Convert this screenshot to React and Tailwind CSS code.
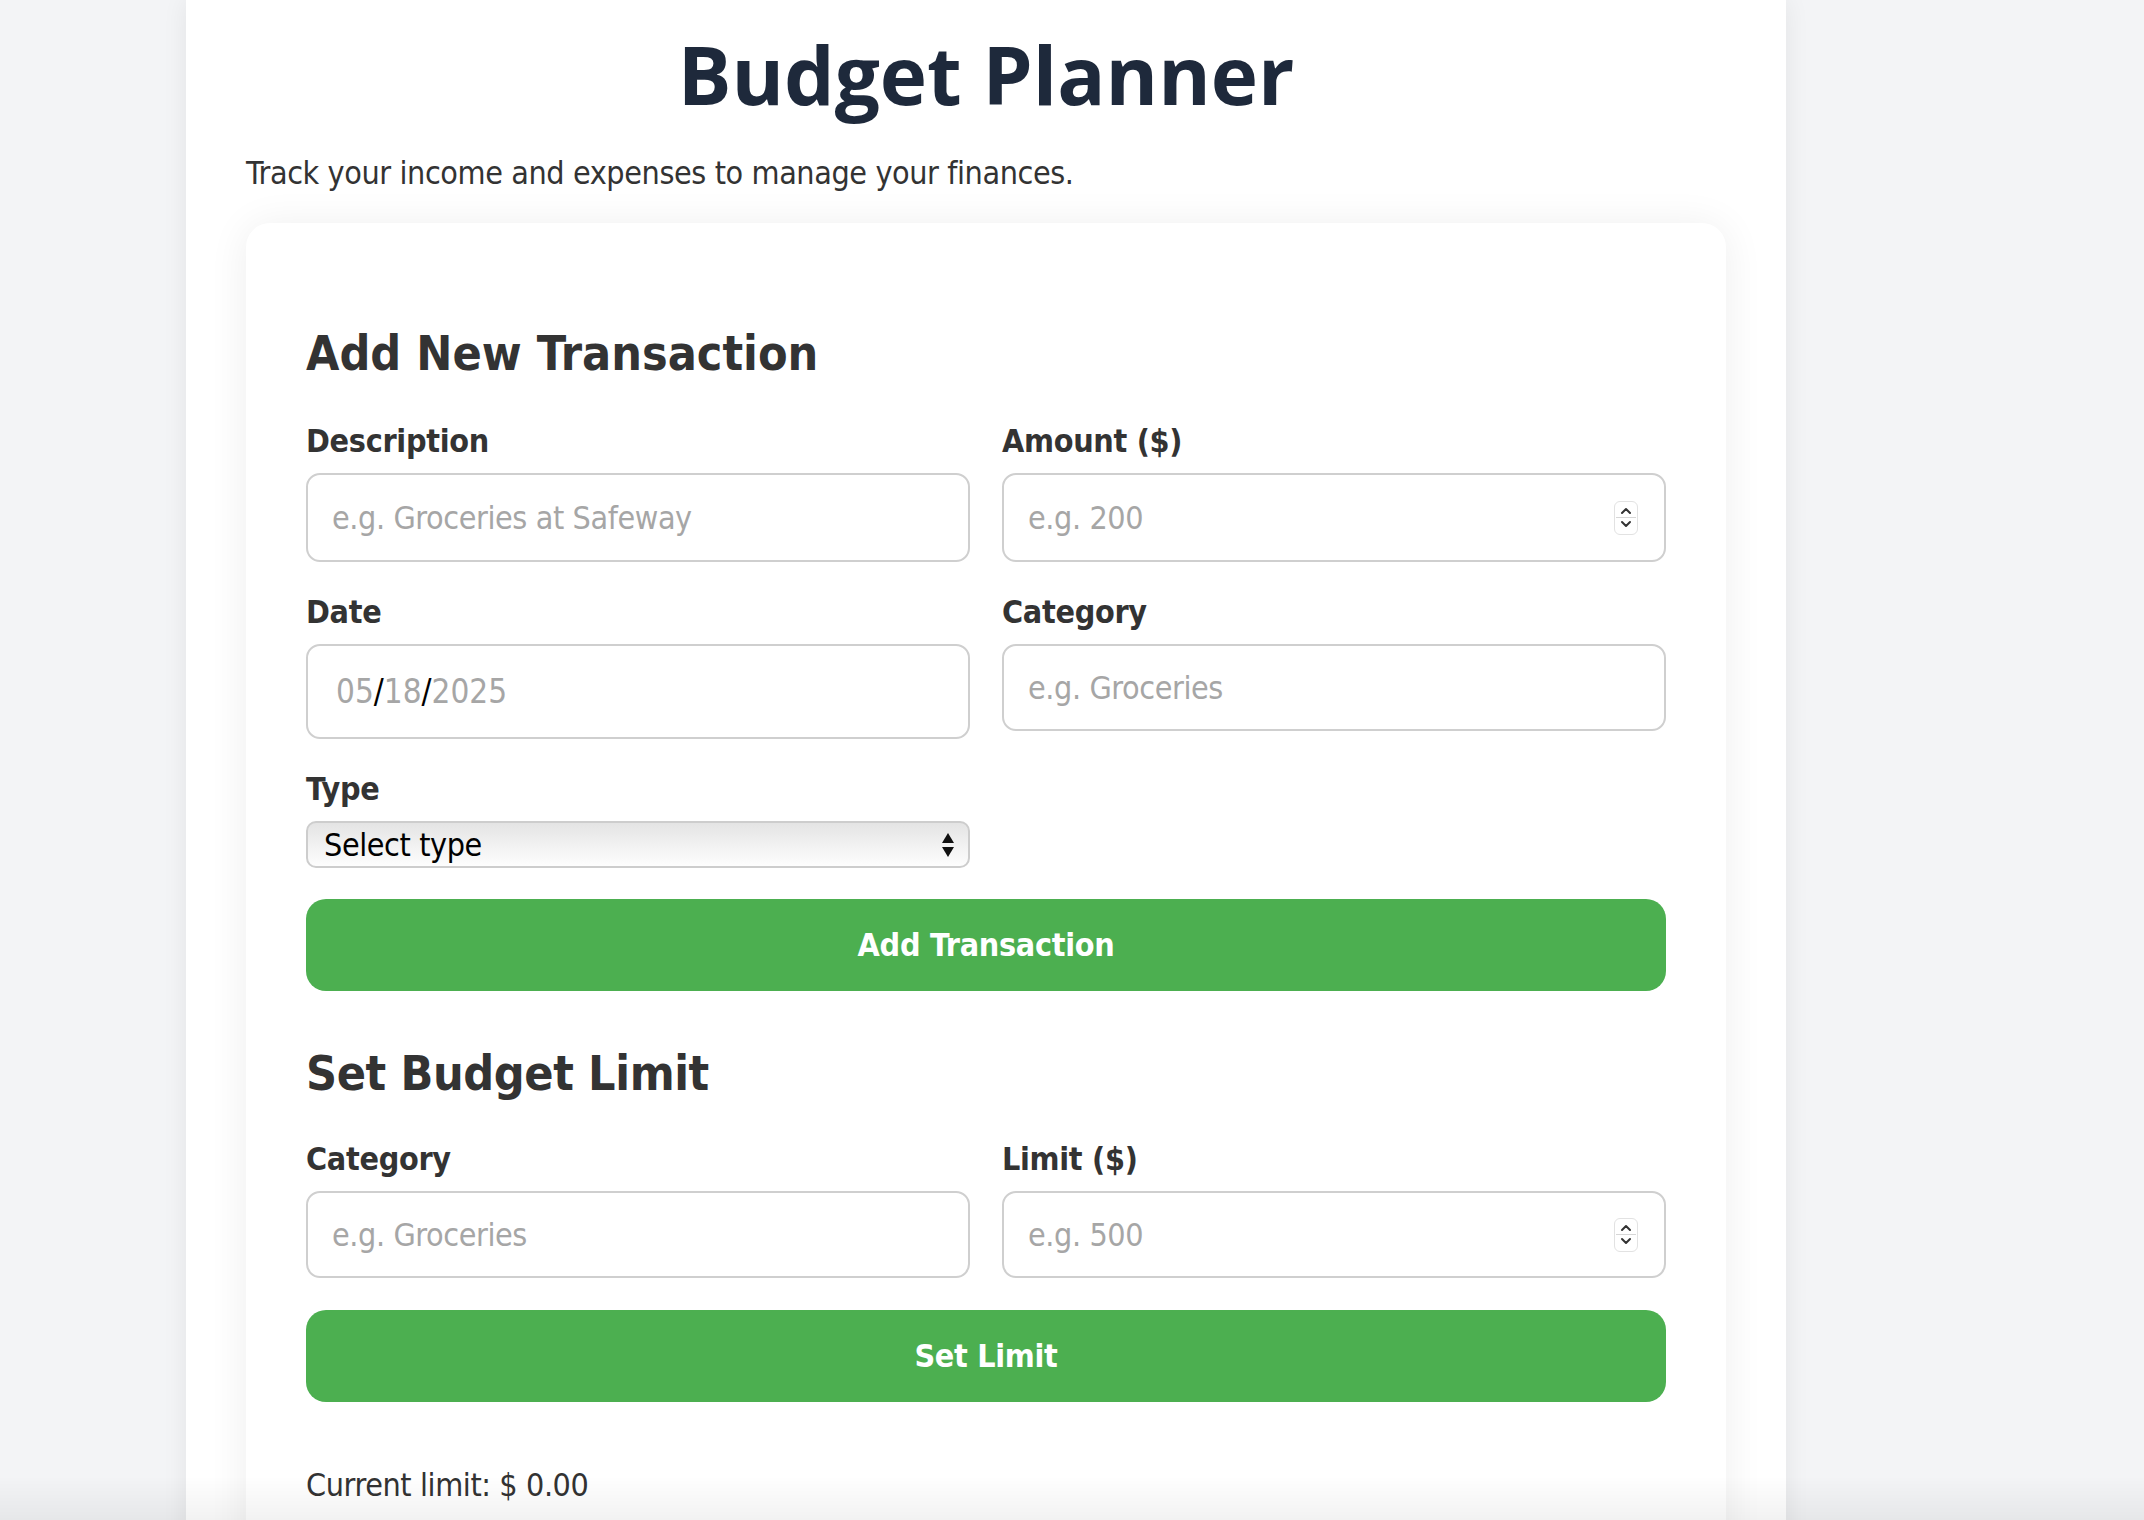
import { useState } from "react";

const body = "font-['DejaVu_Sans_Condensed','DejaVu_Sans',sans-serif] font-stretch-condensed";

function Label({ children, className = "" }) {
  return (
    <label className={`block text-[32px] leading-[36px] tracking-[-0.3px] font-bold text-[#333333] mb-[14px] ${className}`}>
      {children}
    </label>
  );
}

function TextInput({ placeholder, className = "h-[89px]" }) {
  return (
    <input
      type="text"
      placeholder={placeholder}
      className={`block w-full ${className} px-[24px] rounded-[14px] border-2 border-[#cfcfcf] bg-white text-[32px] tracking-[-0.4px] text-[#333333] placeholder:text-[#a6a6a6] outline-none ${body}`}
    />
  );
}

function Spinner() {
  return (
    <div className="absolute right-[28px] top-1/2 -translate-y-1/2 w-[24px] h-[34px] rounded-[6px] border border-[#e2e2e2] bg-white flex flex-col items-center justify-center">
      <svg width="14" height="10" viewBox="0 0 14 10" fill="none" stroke="#333" strokeWidth="2" strokeLinecap="round" strokeLinejoin="round">
        <path d="M3 7 L7 3 L11 7" />
      </svg>
      <div className="w-[20px] h-px bg-[#d6d6d6] my-[1px]" />
      <svg width="14" height="10" viewBox="0 0 14 10" fill="none" stroke="#333" strokeWidth="2" strokeLinecap="round" strokeLinejoin="round">
        <path d="M3 3 L7 7 L11 3" />
      </svg>
    </div>
  );
}

function NumberInput({ placeholder, className }) {
  return (
    <div className="relative">
      <TextInput placeholder={placeholder} className={className} />
      <Spinner />
    </div>
  );
}

function GreenButton({ children }) {
  return (
    <button className={`block w-full h-[92px] rounded-[20px] bg-[#4caf50] text-white text-[32px] tracking-[-0.3px] font-bold ${body}`}>
      {children}
    </button>
  );
}

export default function App() {
  const [type, setType] = useState("");
  const limit = 0;

  return (
    <div className={`min-h-screen bg-[#f3f4f6] ${body}`}>
      <div className="ml-[186px] w-[1600px] min-h-[1520px] bg-white px-[60px] shadow-[0_0_24px_rgba(0,0,0,0.07)]">
        <h1 className="pt-[26px] text-center text-[80px] leading-[96px] font-bold text-[#1e293b] font-['Open_Sans',sans-serif] font-stretch-normal">
          Budget Planner
        </h1>
        <p className="mt-[31px] text-[32px] leading-[40px] tracking-[-0.4px] text-[#333333]">
          Track your income and expenses to manage your finances.
        </p>

        <div className="mt-[30px] rounded-[24px] bg-white px-[60px] pt-[102px] pb-[60px] shadow-[0_2px_40px_rgba(0,0,0,0.07)]">
          <h2 className="text-[48px] leading-[56px] font-bold text-[#333333]">Add New Transaction</h2>

          <div className="mt-[42px] grid grid-cols-2 gap-x-[32px] gap-y-[32px] items-start">
            <div>
              <Label>Description</Label>
              <TextInput placeholder="e.g. Groceries at Safeway" />
            </div>
            <div>
              <Label>Amount ($)</Label>
              <NumberInput placeholder="e.g. 200" />
            </div>
            <div>
              <Label>Date</Label>
              <div className="h-[95px] px-[28px] rounded-[14px] border-2 border-[#cfcfcf] bg-white flex items-center text-[33px] text-[#a6a6a6]">
                <span>05</span>
                <span className="text-black">/</span>
                <span>18</span>
                <span className="text-black">/</span>
                <span>2025</span>
              </div>
            </div>
            <div>
              <Label>Category</Label>
              <TextInput placeholder="e.g. Groceries" className="h-[87px]" />
            </div>
            <div>
              <Label>Type</Label>
              <div className="relative">
                <select
                  value={type}
                  onChange={(e) => setType(e.target.value)}
                  className={`block w-full h-[47px] appearance-none rounded-[10px] border-2 border-[#cdcdcd] bg-gradient-to-b from-[#e4e4e4] via-[#f1f1f1] to-[#fdfdfd] pl-[16px] text-[32px] leading-[40px] tracking-[-0.4px] text-black outline-none ${body}`}
                >
                  <option value="">Select type</option>
                  <option value="income">Income</option>
                  <option value="expense">Expense</option>
                </select>
                <svg className="absolute right-[14px] top-1/2 -translate-y-1/2" width="16" height="30" viewBox="0 0 16 30" fill="#111">
                  <path d="M8 3 L14 13 L2 13 Z" />
                  <path d="M2 17 L14 17 L8 27 Z" />
                </svg>
              </div>
            </div>
          </div>

          <div className="mt-[31px]">
            <GreenButton>Add Transaction</GreenButton>
          </div>

          <h2 className="mt-[54px] text-[48px] leading-[56px] font-bold tracking-[-0.4px] text-[#333333]">Set Budget Limit</h2>

          <div className="mt-[40px] grid grid-cols-2 gap-x-[32px]">
            <div>
              <Label>Category</Label>
              <TextInput placeholder="e.g. Groceries" className="h-[87px]" />
            </div>
            <div>
              <Label>Limit ($)</Label>
              <NumberInput placeholder="e.g. 500" className="h-[87px]" />
            </div>
          </div>

          <div className="mt-[32px]">
            <GreenButton>Set Limit</GreenButton>
          </div>

          <p className="mt-[63px] text-[32px] leading-[40px] tracking-[-0.4px] text-[#333333]">
            Current limit: $ {limit.toFixed(2)}
          </p>
        </div>
      </div>
      <div className="fixed left-0 right-0 bottom-0 h-[44px] bg-gradient-to-b from-transparent to-[rgba(0,0,0,0.05)] pointer-events-none" />
    </div>
  );
}
